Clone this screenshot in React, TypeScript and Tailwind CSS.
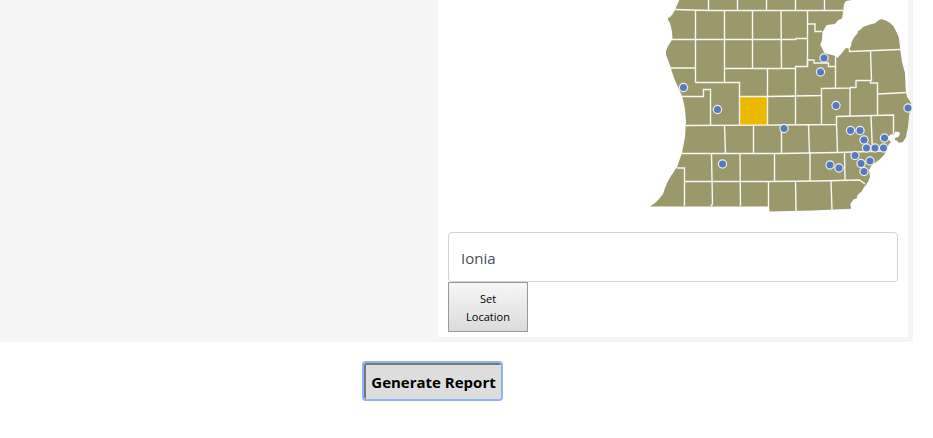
const land =
  "M679 -2 L679 1 L677 5 L675 10 L672 15 L670 17 L668 18 L668 20 L670 23 L671 27 L672 32 L672.5 39 L670 43 L668 46 L666 51 L666 55 L668 60 L671 68 L672 72 L674 78 L678 87 L682 96 L684 104 L685 109 L686 122 L685 137 L682 153 L677 167 L670 177.5 L667 183 L665 188 L663 194 L659 199 L655 203 L650 206.5 L769 206.5 L769.5 211.5 L813 210.5 L851.3 208.7 L850.3 204 L853.5 199.5 L857 198 L857.5 195 L861.7 191.5 L864 187 L866 185 L868.5 181 L870 176.7 L869 170 L872 165 L879 160 L882 157 L884 155 L887.3 149.3 L888.7 144.3 L891 142 L889 140 L889 136 L891 134.3 L894 134.5 L895 131.7 L899 131.7 L900 134 L898.5 136.7 L895 138 L895 140 L897.5 141 L898.3 142.7 L902.7 142.3 L906 137.3 L908 127 L909.3 113.3 L911 108 L911 103 L907 96.7 L905.7 90 L905 73.3 L902 61.7 L900.3 50 L899 38 L897 33 L893.3 26 L890 23 L886.7 21 L883 19.5 L881.7 19 L879 20 L875 23.3 L870 24.5 L863.3 26.7 L860 30 L857.5 31.5 L858 33 L855 36 L851.7 41.7 L851 46 L849.3 49 L846 47.7 L841.7 53.3 L837.3 58 L834 55.5 L830 54.5 L824.3 52.7 L822 48 L820.3 45 L822 40 L822.5 32 L826.7 25 L835 24 L838.3 20 L842 18.5 L843.3 10 L844 4 L846 1 L851.7 0 L852 -2 Z";

const countyLines = [
  "M675 9.5 L708.5 10.5 L843 10.5 M708.5 0 V10 M737.5 0 V10 M766.5 0 V10 M795.5 0 V10 M824.5 0 V10",
  "M695.5 10 V82.5 M724.5 10 V82 M752.5 10 V68 M781 10 L781.5 68 M807.5 10 V66.5",
  "M672 39.5 H781 L795.5 39.5 L796 38.5 H807.5 M807.5 24 H815 V31.5 H822",
  "M670.5 68 H695.5 M724.5 68.5 H795.5 V66.5 H807.5 V60 H814 V63 H828.5 V66.5 H835.5 V57",
  "M695.5 82.5 H739.5 V96.5 H767.5 M767.5 68.5 V125 M795.5 68 V124.5 M767.5 96.5 L821.5 95.5 V88.5 L850 88 L850.5 87.5 H856 V80.5 H870.5 V83 H877.5 V115",
  "M835.5 66 V88.5 M849.5 49 V51.5 L900.5 49.5 M870.5 51 L871.5 81 M877.5 94 L907 92.5 M850 88 V116",
  "M682 96.5 H703.5 V89.5 H710.5 V125 M739.5 96 V125 M821.5 96 V124.5",
  "M686 125.5 L781 125 L836.5 124.5 V116.5 L893.5 115 V134",
  "M724.5 125 L725.5 153.5 M753.5 125 V153.5 M781.5 125 V153 M808.5 125 L809.5 153 M836.5 124 L837.5 152.5 M871 116 L872.5 152",
  "M682 153.5 H781 L837.5 152.5 L885 151",
  "M677 168 H684.5 V206 M711.5 154 L712.5 204 L711 206 M740 154 L740.5 206 M774.5 154 V181.5 M810 153 V181 M844.5 153 L845 180",
  "M684.5 181.5 H768.5 V207 M768.5 181.5 L817 181 L859.5 180 L865 184 M795.5 182 L796 211 M831 181 L832 210",
];

const sites = [
  [824, 58], [820.5, 72], [683.5, 87.5], [717.5, 109.5], [836, 105.5], [908, 108],
  [784, 128.5], [850.5, 130.5], [860, 130.5], [864, 140], [884.5, 138], [866.5, 148],
  [875, 148], [883.5, 148], [855, 155.5], [870, 161], [861, 163.5], [864, 171.5],
  [830, 165], [839, 168], [722.5, 164],
];

function CountyMap() {
  return (
    <svg
      className="ml-auto block h-[222px] w-[250px] overflow-visible"
      viewBox="648 0 250 222"
      role="img"
      aria-label="County map"
    >
      <path d={land} fill="#9b996c" />
      <path d="M740 97 H767 V125 H740 Z" fill="#ecb800" />
      <g fill="none" stroke="#f8f8f2" strokeWidth="1.4">
        {countyLines.map((d) => (
          <path key={d} d={d} />
        ))}
      </g>
      <g fill="#567abd" stroke="#edf0f5" strokeWidth="1.2">
        {sites.map(([x, y]) => (
          <circle key={`${x}-${y}`} cx={x} cy={y} r="4.1" />
        ))}
      </g>
    </svg>
  );
}

export default function App() {
  return (
    <main className="bg-white pr-5 pb-9 font-['Open_Sans',sans-serif] text-black">
      <section className="flex justify-end bg-[#f5f5f5] pr-[5px] pb-[5px]">
        <div className="w-[470px] bg-white px-2.5 pb-[5px]">
          <CountyMap />
          <div className="pt-2.5">
            <input
              aria-label="Location"
              defaultValue="Ionia"
              className="block h-[50px] w-full rounded border border-[#ced4da] bg-white px-3 pt-0.5 text-[15px] text-[#495057] outline-none"
            />
            <button className="block h-[50px] w-20 border border-[#999] bg-linear-to-b from-[#f6f6f6] to-[#dcdcdc] pt-0.5 text-[11px] leading-[18px]">
              Set
              <br />
              Location
            </button>
          </div>
        </div>
      </section>
      <div className="flex justify-center pt-[21px] pr-12">
        <button className="h-9 rounded-xs border-t-2 border-l-2 border-[#767676] bg-[#ddd] px-[5px] text-[15px] font-bold outline-2 outline-[#8ab4f8]">
          Generate Report
        </button>
      </div>
    </main>
  );
}
